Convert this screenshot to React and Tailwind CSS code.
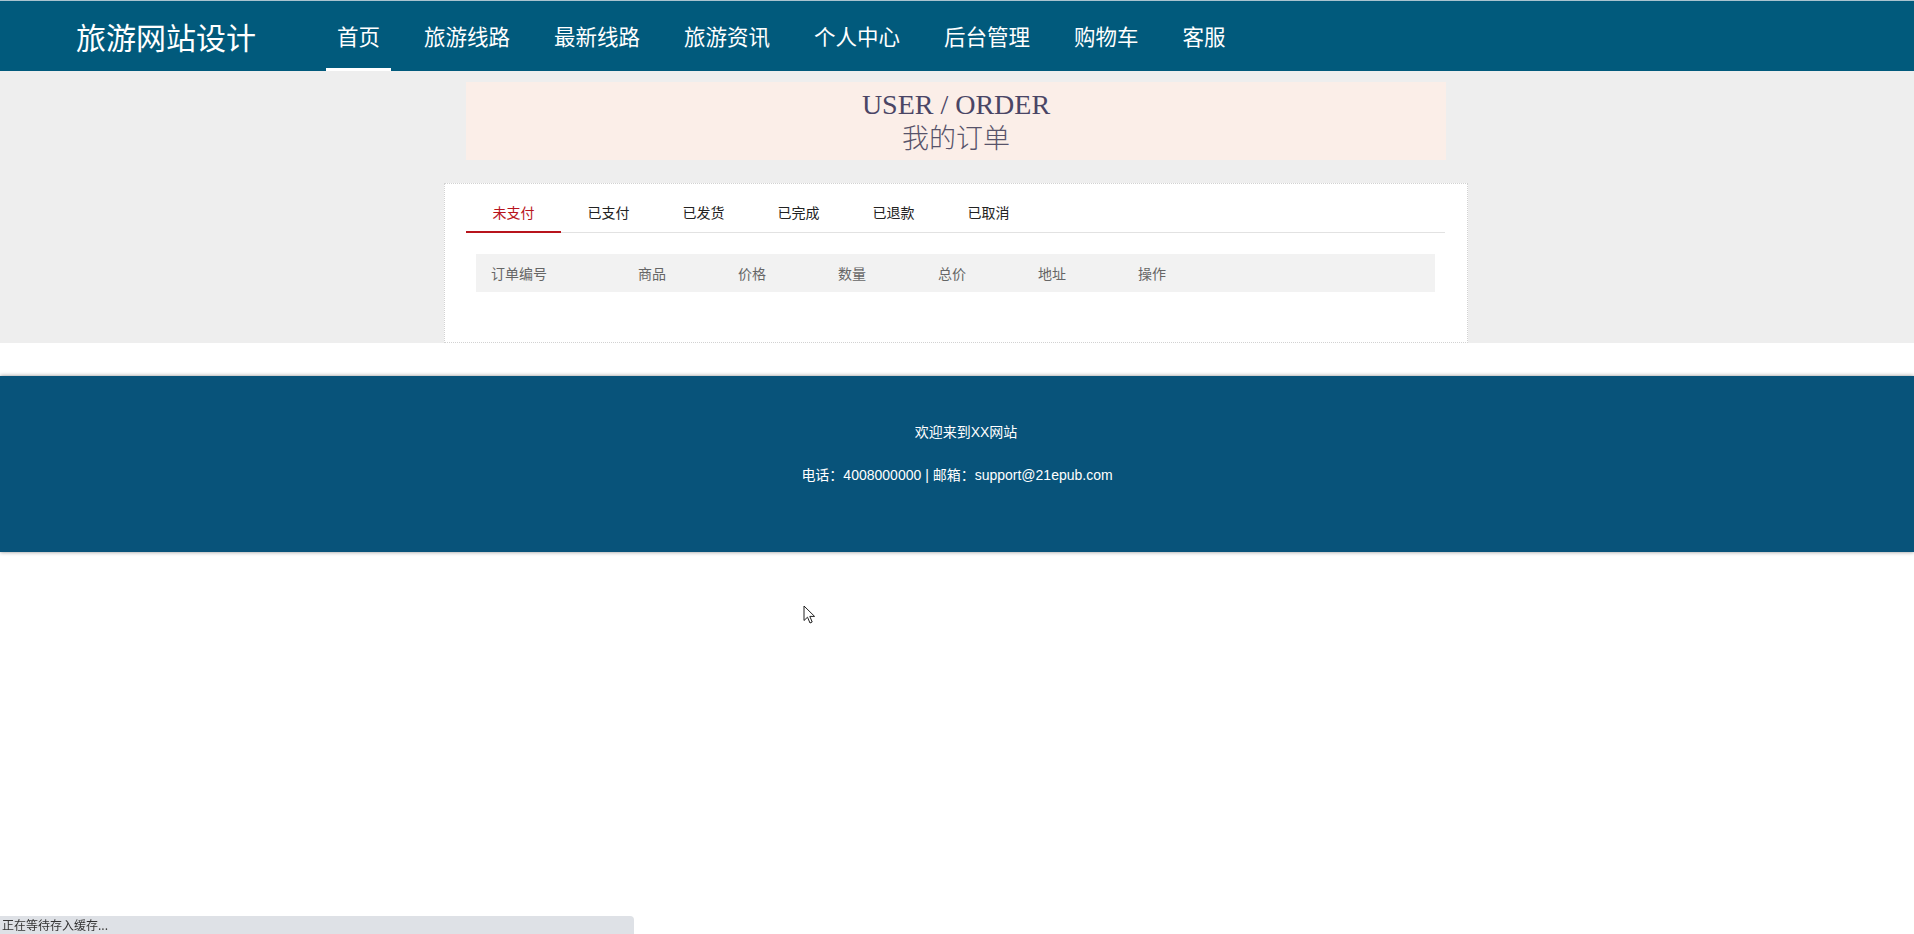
import React from "react";

const navItems = ["首页", "旅游线路", "最新线路", "旅游资讯", "个人中心", "后台管理", "购物车", "客服"];
const tabs = ["未支付", "已支付", "已发货", "已完成", "已退款", "已取消"];
const cols = [
  { t: "订单编号", w: "w-[147px]" },
  { t: "商品", w: "w-[100px]" },
  { t: "价格", w: "w-[100px]" },
  { t: "数量", w: "w-[100px]" },
  { t: "总价", w: "w-[100px]" },
  { t: "地址", w: "w-[100px]" },
  { t: "操作", w: "w-[100px]" },
];

export default function App() {
  return (
    <div
      className="relative min-h-[934px] bg-white"
      style={{ fontFamily: '"Noto Sans CJK SC", "Liberation Sans", sans-serif' }}
    >
      {/* Header */}
      <header className="h-[71px] bg-[#015a7c] border-t border-[#a9c3cf] flex items-stretch pl-[76px]">
        <div className="flex items-center text-[30px] leading-none text-white">旅游网站设计</div>
        <nav className="ml-[70px] flex items-stretch gap-[22px]">
          {navItems.map((n, i) => (
            <div
              key={n}
              className="relative flex items-center px-[11px] text-[21.5px] leading-none text-white"
            >
              {n}
              {i === 0 && <span className="absolute left-0 right-0 bottom-0 h-[3px] bg-white" />}
            </div>
          ))}
        </nav>
      </header>

      {/* Gray content area */}
      <section className="bg-[#eeeeee] pt-[11px]">
        <div className="mx-auto w-[980px] h-[78px] bg-[#fbeee8] flex flex-col items-center justify-center gap-[3px] -translate-x-[1px]">
          <div
            className="text-[28px] leading-[28px] text-[#4a4565]"
            style={{ fontFamily: '"Liberation Serif", "Noto Sans CJK SC", serif' }}
          >
            USER / ORDER
          </div>
          <div className="text-[27px] leading-[29px] text-[#57536a] font-light">我的订单</div>
        </div>

        <div className="mx-auto mt-[23px] w-[1024px] border border-dotted border-[#d2d2d2] bg-white pl-[21px] pr-[22px] pt-[9px] pb-[50px] -translate-x-[1px]">
          <div className="flex h-[40px] border-b border-[#e2e2e2]">
            {tabs.map((t, i) => (
              <div
                key={t}
                className={
                  i === 0
                    ? "w-[95px] flex items-center justify-center text-[14px] text-[#b8141c] border-b-2 border-[#b8141c] -mb-px"
                    : "w-[95px] flex items-center justify-center text-[14px] text-[#222]"
                }
              >
                {t}
              </div>
            ))}
          </div>
          <div className="mx-[10px] mt-[21px] h-[38px] bg-[#f2f2f2] flex items-center">
            {cols.map((c) => (
              <div key={c.t} className={`${c.w} pl-[15px] text-[14px] text-[#666]`}>
                {c.t}
              </div>
            ))}
          </div>
        </div>
      </section>

      {/* Footer */}
      <footer
        className="mt-[33px] h-[176px] bg-[#08537a] shadow-[0_0_4px_rgba(0,0,0,0.45)] flex flex-col items-center pt-[46px] text-white text-[14px]"
        style={{ fontFamily: '"Liberation Sans", "Noto Sans CJK SC", sans-serif' }}
      >
        <div className="leading-[20px] pl-[18px]">欢迎来到XX网站</div>
        <div className="leading-[20px] mt-[23px]">电话：4008000000 | 邮箱：support@21epub.com</div>
      </footer>

      {/* Mouse cursor */}
      <svg
        className="absolute left-[803px] top-[605px]"
        width="13"
        height="20"
        viewBox="0 0 13 20"
      >
        <path
          d="M1 1 L1 15.5 L4.5 12.2 L7 18 L9.2 17 L6.8 11.4 L11.6 11.4 Z"
          fill="#fff"
          stroke="#222"
          strokeWidth="1"
          strokeLinejoin="round"
        />
      </svg>

      {/* Browser status bubble */}
      <div
        className="fixed left-0 bottom-0 w-[634px] h-[18px] bg-[#dee1e6] rounded-tr-[4px] flex items-center pl-[2px] text-[12px] text-[#333]"
        style={{ fontFamily: '"Noto Sans CJK SC", "Liberation Sans", sans-serif' }}
      >
        正在等待存入缓存...
      </div>
    </div>
  );
}
